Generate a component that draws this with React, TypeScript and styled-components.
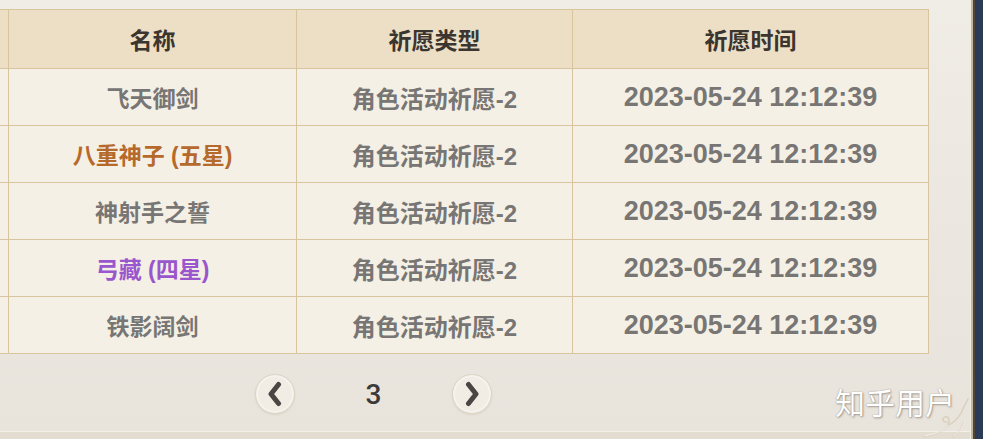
import React from "react";
import styled, { createGlobalStyle } from "styled-components";

const Global = createGlobalStyle`
  html, body { margin: 0; padding: 0; background: #2b3b57; }
  #root { width: 983px; height: 439px; overflow: hidden; }
`;

const BORDER = "#d8c59e";

const Frame = styled.div`
  display: flex;
  width: 983px;
  height: 439px;
  background: #2b3b57;
`;

const Page = styled.div`
  position: relative;
  width: 970px;
  flex: none;
  height: 100%;
  box-sizing: border-box;
  padding-top: 9px;
  display: flex;
  flex-direction: column;
  overflow: hidden;
  background: linear-gradient(180deg, #f0ece6 0%, #ebe7e0 55%, #e8e3db 100%);
`;

const Edge = styled.div`
  width: 5px;
  flex: none;
  background: linear-gradient(
    90deg,
    #f1ece2 0 1px,
    #c2b69e 1px 3px,
    #4f4637 3px 5px
  );
`;

const Table = styled.div`
  display: grid;
  grid-template-columns: 61px 288px 276px 356px;
  width: max-content;
  margin-left: -53px;
  border-top: 1px solid ${BORDER};
  border-left: 1px solid ${BORDER};
`;

const HeadCell = styled.div`
  height: 58px;
  display: flex;
  align-items: center;
  justify-content: center;
  background: #ecdfc5;
  border-right: 1px solid ${BORDER};
  border-bottom: 1px solid ${BORDER};
  font-family: "Noto Sans CJK SC", sans-serif;
  font-weight: 700;
  font-size: 23px;
  color: #3b352f;
`;

type Tone = "grey" | "gold" | "purple";
const toneColor: Record<Tone, string> = {
  grey: "#777674",
  gold: "#b5692b",
  purple: "#9a56cc",
};

const Cell = styled.div<{ $tone?: Tone; $size?: number }>`
  height: 56px;
  display: flex;
  align-items: center;
  justify-content: center;
  background: #f5f0e5;
  border-right: 1px solid ${BORDER};
  border-bottom: 1px solid ${BORDER};
  font-family: "Liberation Sans", "Noto Sans CJK SC", sans-serif;
  font-weight: 700;
  font-size: ${(p) => p.$size ?? 23}px;
  color: ${(p) => toneColor[p.$tone ?? "grey"]};
  white-space: nowrap;
`;

const Pager = styled.div`
  flex: 1;
  display: flex;
  align-items: center;
  padding-left: 255px;
  padding-top: 3px;
`;

const PageBtn = styled.button`
  width: 40px;
  height: 40px;
  border-radius: 50%;
  border: 1px solid #ddd4c3;
  background: #f1ede5;
  box-shadow: inset 0 0 0 2px rgba(255, 255, 255, 0.35), 0 1px 2px rgba(150, 135, 110, 0.15);
  display: flex;
  align-items: center;
  justify-content: center;
  padding: 0;
  cursor: pointer;
`;

const PageNum = styled.div`
  width: 157px;
  text-align: center;
  font-family: Roboto, "Liberation Sans", sans-serif;
  font-weight: 500;
  font-size: 28px;
  color: #3c3a38;
`;

const BottomBand = styled.div`
  height: 7px;
  flex: none;
  border-top: 1px solid #f4f0e9;
  background: #e3ddd1;
`;

const Watermark = styled.div`
  position: absolute;
  left: 835px;
  top: 386px;
  font-family: "Noto Sans CJK SC", sans-serif;
  font-weight: 400;
  font-size: 30px;
  line-height: 1;
  color: #ffffff;
  text-shadow: 0 0 1px rgba(90, 80, 70, 0.7), 1px 1px 2px rgba(90, 80, 70, 0.45);
`;

const Ornament = styled.svg`
  position: absolute;
  right: 0;
  bottom: 0;
  pointer-events: none;
`;

const Chevron = ({ dir }: { dir: "left" | "right" }) => (
  <svg width="16" height="26" viewBox="0 0 16 26">
    <path
      d={dir === "left" ? "M11.5 3.5 L4 13 L11.5 22.5" : "M4.5 3.5 L12 13 L4.5 22.5"}
      fill="none"
      stroke="#4a4643"
      strokeWidth="5"
      strokeLinecap="round"
      strokeLinejoin="round"
    />
  </svg>
);

const rows: { name: string; tone: Tone }[] = [
  { name: "飞天御剑", tone: "grey" },
  { name: "八重神子 (五星)", tone: "gold" },
  { name: "神射手之誓", tone: "grey" },
  { name: "弓藏 (四星)", tone: "purple" },
  { name: "铁影阔剑", tone: "grey" },
];

export default function App() {
  return (
    <>
      <Global />
      <Frame>
        <Page>
          <Table>
            <HeadCell />
            <HeadCell>名称</HeadCell>
            <HeadCell>祈愿类型</HeadCell>
            <HeadCell>祈愿时间</HeadCell>
            {rows.map((r, i) => (
              <React.Fragment key={i}>
                <Cell />
                <Cell $tone={r.tone}>{r.name}</Cell>
                <Cell $size={24}>角色活动祈愿-2</Cell>
                <Cell $size={27}>2023-05-24 12:12:39</Cell>
              </React.Fragment>
            ))}
          </Table>
          <Pager>
            <PageBtn aria-label="上一页">
              <Chevron dir="left" />
            </PageBtn>
            <PageNum>3</PageNum>
            <PageBtn aria-label="下一页">
              <Chevron dir="right" />
            </PageBtn>
          </Pager>
          <BottomBand />
          <Ornament width="50" height="46" viewBox="0 0 50 46">
            <path
              d="M4 44 C14 42 22 39 27 33 C31 28 29 23 25 24 C21 25 23 30 27 29 M27 33 C33 30 38 26 41 20 C43 15 46 10 48 6 M33 44 C38 40 42 35 44 29"
              fill="none"
              stroke="#d9d0bf"
              strokeWidth="1.5"
              strokeLinecap="round"
            />
            <path
              d="M5 43 C15 41 23 38 28 32 M34 43 C39 39 43 34 45 28"
              fill="none"
              stroke="#faf7f1"
              strokeWidth="0.8"
              strokeLinecap="round"
            />
          </Ornament>
          <Watermark>知乎用户</Watermark>
        </Page>
        <Edge />
      </Frame>
    </>
  );
}
